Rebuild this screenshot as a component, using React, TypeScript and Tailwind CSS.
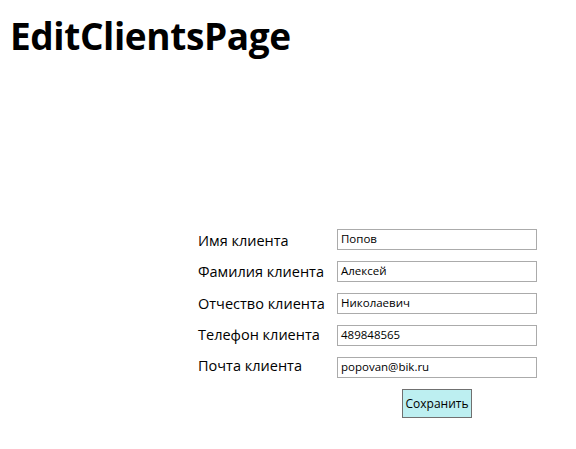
const fields = [
  { label: 'Имя клиента', value: 'Попов' },
  { label: 'Фамилия клиента', value: 'Алексей' },
  { label: 'Отчество клиента', value: 'Николаевич' },
  { label: 'Телефон клиента', value: '489848565' },
  { label: 'Почта клиента', value: 'popovan@bik.ru' },
];

export default function App() {
  return (
    <div
      className="w-[576px] h-[449px] bg-white text-black overflow-hidden"
      style={{ fontFamily: '"Open Sans", "Noto Sans", sans-serif' }}
    >
      <h1 className="pl-[10px] pt-[13px] text-[37px] font-bold leading-[46px] tracking-[-0.4px]">
        EditClientsPage
      </h1>

      <div className="mt-[170px] ml-[198px] flex items-start">
        {/* labels */}
        <div className="w-[139px] flex flex-col pt-[1px]">
          {fields.map((f) => (
            <span key={f.label} className="h-[31.25px] text-[14.5px] leading-[22px]">
              {f.label}
            </span>
          ))}
        </div>
        {/* inputs + save */}
        <div className="flex flex-col gap-[11px]">
          {fields.map((f) => (
            <div
              key={f.label}
              className="w-[200px] h-[21px] border border-[#ababab] px-[3px] text-[11.5px] leading-[17px]"
            >
              {f.value}
            </div>
          ))}
          <div className="pl-[65px]">
            <button className="w-[70px] h-[29px] border border-[#707070] bg-[#bdeff1] text-[12px] leading-none">
              Сохранить
            </button>
          </div>
        </div>
      </div>
    </div>
  );
}
